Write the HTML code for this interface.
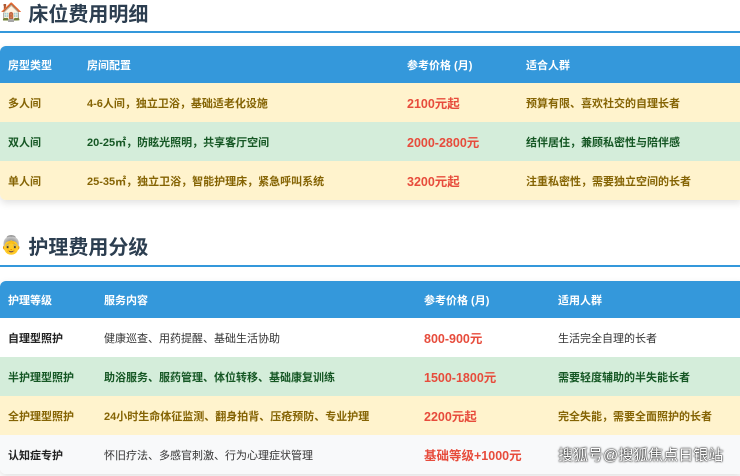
<!DOCTYPE html>
<html><head><meta charset="utf-8"><style>
*{margin:0;padding:0;box-sizing:border-box}
body{width:740px;height:476px;overflow:hidden;background:#fff;font-family:"Liberation Sans","Noto Sans CJK SC",sans-serif;position:relative}
.t{position:absolute;left:0;font-size:20px;font-weight:bold;color:#2c3e50;display:flex;align-items:center;gap:6px}
.line{position:absolute;left:0;width:740px;height:2px;background:#3498db}
.tb{position:absolute;left:0;width:742px;border-radius:6px 0 0 6px;overflow:hidden;box-shadow:0 3px 8px rgba(0,0,0,.12)}
.r{position:relative;font-size:11px;display:flex;align-items:center}
.r span{position:absolute}
.h{background:#3498db;color:#fff;font-weight:bold;font-size:11px}
.y{background:#fff3cd;color:#856404;font-weight:bold}
.g{background:#d4edda;color:#155724;font-weight:bold}
.w{background:#fff;color:#333}
.s{background:#f8f9fa;color:#333}
.p{color:#e74c3c;font-weight:bold;font-size:12.5px}
.w span:first-child,.s span:first-child{font-weight:bold;color:#222}
</style></head><body>
<div class="t" style="top:-2px;"><span style="font-size:18px">🏠</span>床位费用明细</div>
<div class="line" style="top:31px"></div>
<div class="tb" style="top:46px">
<div class="r h" style="height:37px"><span style="left:8px">房型类型</span><span style="left:87px">房间配置</span><span style="left:407px">参考价格 (月)</span><span style="left:526px">适合人群</span></div>
<div class="r y" style="height:39px"><span style="left:8px">多人间</span><span style="left:87px">4-6人间，独立卫浴，基础适老化设施</span><span style="left:407px" class="p">2100元起</span><span style="left:526px">预算有限、喜欢社交的自理长者</span></div>
<div class="r g" style="height:39px"><span style="left:8px">双人间</span><span style="left:87px">20-25㎡，防眩光照明，共享客厅空间</span><span style="left:407px" class="p">2000-2800元</span><span style="left:526px">结伴居住，兼顾私密性与陪伴感</span></div>
<div class="r y" style="height:39px"><span style="left:8px">单人间</span><span style="left:87px">25-35㎡，独立卫浴，智能护理床，紧急呼叫系统</span><span style="left:407px" class="p">3200元起</span><span style="left:526px">注重私密性，需要独立空间的长者</span></div>
</div>
<div class="t" style="top:231px;"><span style="font-size:18px">👵</span>护理费用分级</div>
<div class="line" style="top:265px"></div>
<div class="tb" style="top:281px">
<div class="r h" style="height:37px"><span style="left:8px">护理等级</span><span style="left:104px">服务内容</span><span style="left:424px">参考价格 (月)</span><span style="left:558px">适用人群</span></div>
<div class="r w" style="height:39px"><span style="left:8px">自理型照护</span><span style="left:104px">健康巡查、用药提醒、基础生活协助</span><span style="left:424px" class="p">800-900元</span><span style="left:558px">生活完全自理的长者</span></div>
<div class="r g" style="height:39px"><span style="left:8px">半护理型照护</span><span style="left:104px">助浴服务、服药管理、体位转移、基础康复训练</span><span style="left:424px" class="p">1500-1800元</span><span style="left:558px">需要轻度辅助的半失能长者</span></div>
<div class="r y" style="height:39px"><span style="left:8px">全护理型照护</span><span style="left:104px">24小时生命体征监测、翻身拍背、压疮预防、专业护理</span><span style="left:424px" class="p">2200元起</span><span style="left:558px">完全失能，需要全面照护的长者</span></div>
<div class="r s" style="height:39px"><span style="left:8px">认知症专护</span><span style="left:104px">怀旧疗法、多感官刺激、行为心理症状管理</span><span style="left:424px" class="p">基础等级+1000元</span><span style="left:558px;font-size:15px;color:#fff;text-shadow:0 0 2px #000,0 0 1px #000">搜狐号@搜狐焦点日银站</span></div>
</div>
</body></html>
